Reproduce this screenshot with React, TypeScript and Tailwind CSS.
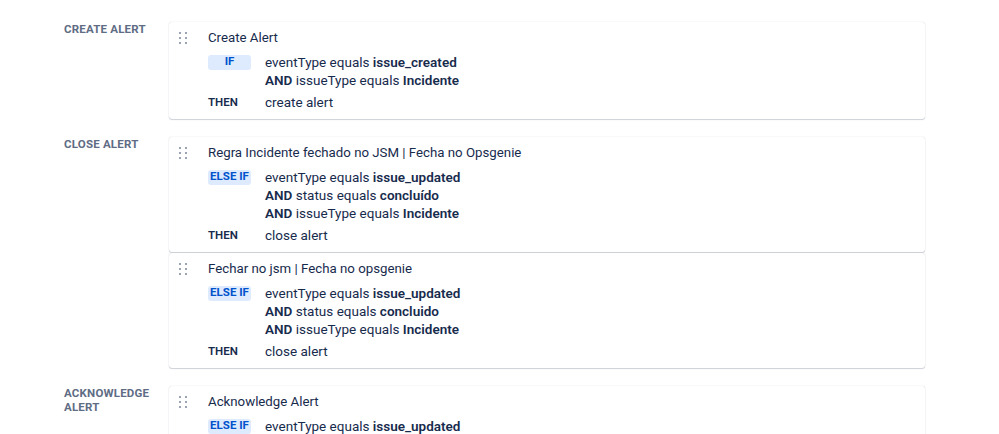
import React from 'react';

type Cond = { kw?: string; field: string; value: string };
type Rule = { title: string; badge: 'IF' | 'ELSE IF'; conds: Cond[]; action: string };
type Group = { label: string; rules: Rule[] };

const groups: Group[] = [
  {
    label: 'Create Alert',
    rules: [
      {
        title: 'Create Alert',
        badge: 'IF',
        conds: [
          { field: 'eventType', value: 'issue_created' },
          { kw: 'AND', field: 'issueType', value: 'Incidente' },
        ],
        action: 'create alert',
      },
    ],
  },
  {
    label: 'Close Alert',
    rules: [
      {
        title: 'Regra Incidente fechado no JSM | Fecha no Opsgenie',
        badge: 'ELSE IF',
        conds: [
          { field: 'eventType', value: 'issue_updated' },
          { kw: 'AND', field: 'status', value: 'concluído' },
          { kw: 'AND', field: 'issueType', value: 'Incidente' },
        ],
        action: 'close alert',
      },
      {
        title: 'Fechar no jsm | Fecha no opsgenie',
        badge: 'ELSE IF',
        conds: [
          { field: 'eventType', value: 'issue_updated' },
          { kw: 'AND', field: 'status', value: 'concluido' },
          { kw: 'AND', field: 'issueType', value: 'Incidente' },
        ],
        action: 'close alert',
      },
    ],
  },
  {
    label: 'Acknowledge Alert',
    rules: [
      {
        title: 'Acknowledge Alert',
        badge: 'ELSE IF',
        conds: [
          { field: 'eventType', value: 'issue_updated' },
          { kw: 'AND', field: 'status', value: 'Em andamento' },
        ],
        action: 'acknowledge alert',
      },
    ],
  },
];

function DragHandle() {
  return (
    <div className="grid w-[8px] shrink-0 grid-cols-2 gap-x-[4px] gap-y-[3px]">
      {[0, 1, 2, 3, 4, 5].map((i) => (
        <span key={i} className="h-[2px] w-[2px] rounded-full bg-[#7a869a]" />
      ))}
    </div>
  );
}

function RuleCard({ rule }: { rule: Rule }) {
  return (
    <div className="flex gap-[21px] rounded-[3px] bg-white pb-[8px] pl-[10px] pr-[10px] pt-[6px] shadow-[0_1px_1px_rgba(9,30,66,0.18),0_0_1px_rgba(9,30,66,0.25)]">
      <div className="flex h-[20px] items-center">
        <DragHandle />
      </div>
      <div className="min-w-0 flex-1">
        <div className="text-[13.25px] leading-[20px] text-[#172b4d]">{rule.title}</div>
        <div className="mt-[5px] flex">
          <div className="flex h-[18px] w-[57px] shrink-0 items-center">
            <span className="flex h-[15px] w-[43px] items-center justify-center rounded-[3px] bg-[#deebff] text-[11.5px] font-bold leading-none text-[#0052cc]">
              {rule.badge}
            </span>
          </div>
          <div className="text-[13.5px] leading-[18px] text-[#172b4d]">
            {rule.conds.map((c, i) => (
              <div key={i}>
                {c.kw && <span className="font-semibold">{c.kw} </span>}
                {c.field} equals <span className="font-semibold">{c.value}</span>
              </div>
            ))}
          </div>
        </div>
        <div className="mt-[4px] flex">
          <div className="w-[57px] shrink-0 text-[11.5px] font-semibold leading-[18px] text-[#172b4d]">THEN</div>
          <div className="text-[13.5px] leading-[18px] text-[#172b4d]">{rule.action}</div>
        </div>
      </div>
    </div>
  );
}

export default function App() {
  return (
    <div
      className="h-[434px] overflow-hidden bg-white pl-[64px] pr-[74px] pt-[22px]"
      style={{ fontFamily: 'Roboto, Inter, "Noto Sans", sans-serif' }}
    >
      <div className="flex flex-col gap-[18px]">
        {groups.map((g) => (
          <div key={g.label} className="flex gap-[15px]">
            <div className="w-[90px] shrink-0 text-[11.5px] font-bold uppercase leading-[14px] tracking-[0.2px] text-[#5e6c84]">
              {g.label}
            </div>
            <div className="flex min-w-0 flex-1 flex-col gap-[1px]">
              {g.rules.map((r, i) => (
                <RuleCard key={i} rule={r} />
              ))}
            </div>
          </div>
        ))}
      </div>
    </div>
  );
}
